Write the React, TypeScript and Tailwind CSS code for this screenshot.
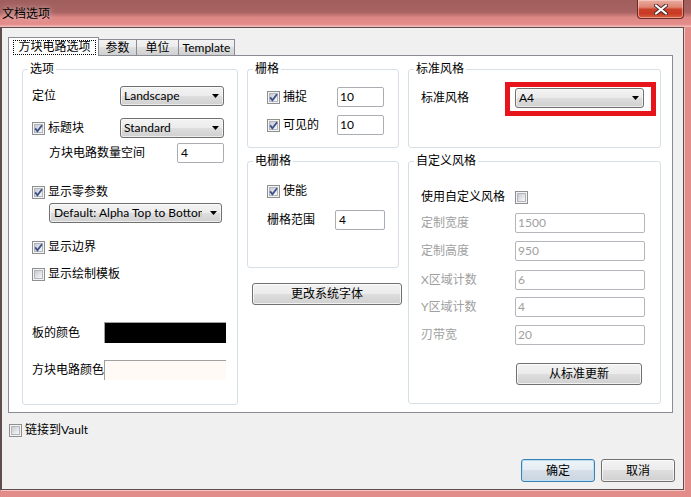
import React from "react";

function Check({ checked }: { checked?: boolean }) {
  return (
    <span className="relative flex h-[13px] w-[13px] shrink-0 items-center justify-center border border-[#8e8f8f] bg-[#f4f4f4]">
      <span className="h-[9px] w-[9px] border border-[#b3b7bd] bg-[linear-gradient(135deg,#c6c9cf_0%,#e3e4e7_55%,#f7f7f7_100%)]" />
      {checked && (
        <svg className="absolute left-[0px] top-[0px]" width="11" height="11" viewBox="0 0 11 11">
          <path d="M2.2 5.4 L4.4 8.2 L9 2.2" fill="none" stroke="#3b4f8c" strokeWidth="1.8" />
        </svg>
      )}
    </span>
  );
}

function Select({ value, className, textClass }: { value: string; className: string; textClass?: string }) {
  return (
    <div
      className={
        "flex h-[20px] items-center rounded-[3px] border border-[#707070] bg-[linear-gradient(to_bottom,#f3f3f3_0%,#ebebeb_50%,#dedede_50%,#d0d0d0_100%)] pl-[3px] pr-[4px] shadow-[inset_0_0_0_1px_rgba(255,255,255,0.6)] " +
        className
      }
    >
      <span className={"overflow-hidden whitespace-nowrap leading-[16px] " + (textClass ?? "flex-1")}>{value}</span>
      <svg className="ml-auto shrink-0" width="7" height="4" viewBox="0 0 7 4">
        <path d="M0 0 H7 L3.5 4 Z" fill="#000" />
      </svg>
    </div>
  );
}

function Input({ value, className, disabled }: { value: string; className: string; disabled?: boolean }) {
  return (
    <div
      className={
        "flex h-[20px] items-center rounded-[2px] border bg-white pl-[2px] leading-[16px] " +
        (disabled ? "border-[#b3b6ba] text-[#a0a0a0] " : "border-[#abadb3] text-black ") +
        className
      }
    >
      {value}
    </div>
  );
}

function Btn({ label, className, def }: { label: string; className: string; def?: boolean }) {
  return (
    <div
      className={
        "flex items-center justify-center rounded-[3px] border leading-[16px] " +
        (def
          ? "border-[#3c7fb1] bg-[linear-gradient(to_bottom,#eef4f9_0%,#e4ecf3_50%,#d6dfe8_50%,#ccd6e0_100%)] shadow-[inset_0_0_0_1px_#b9e0f7] "
          : "border-[#707070] bg-[linear-gradient(to_bottom,#f3f3f3_0%,#ebebeb_50%,#dedede_50%,#d0d0d0_100%)] shadow-[inset_0_0_0_1px_rgba(255,255,255,0.7)] ") +
        className
      }
    >
      {label}
    </div>
  );
}

function Group({ title, className, children }: { title: string; className: string; children?: React.ReactNode }) {
  return (
    <div className={"relative shrink-0 rounded-[3px] border border-[#d5dfe5] " + className}>
      <span className="absolute -top-[9px] left-[5px] bg-white px-[2px] leading-[16px]">{title}</span>
      {children}
    </div>
  );
}

export default function App() {
  return (
    <div className="flex h-[497px] w-[691px] flex-col overflow-hidden bg-[#e38d8b] font-['Lato','Noto_Sans_CJK_SC',sans-serif] text-[12px] text-black">
      {/* Title bar */}
      <div className="flex h-[27px] shrink-0 items-start bg-[linear-gradient(to_bottom,#9f5d5c_0%,#a86362_45%,#dd8886_65%,#e48c8a_90%,#f3c3c1_100%)]">
        <span className="mt-[6px] pl-[2px] leading-[16px] [text-shadow:0_0_6px_rgba(255,255,255,0.7)]">文档选项</span>
        <div className="ml-auto mr-[7px] flex h-[19px] w-[47px] items-center justify-center rounded-b-[4px] border border-t-0 border-[#6b2b28] bg-[linear-gradient(to_bottom,#e9aea4_0%,#de8471_40%,#c9412a_52%,#c93a24_75%,#d9613f_100%)] shadow-[inset_0_0_0_1px_rgba(255,220,210,0.5)]">
          <svg width="14" height="11" viewBox="0 0 14 11">
            <path d="M2 1.5 L12 9.5 M12 1.5 L2 9.5" stroke="#4a2a2a" strokeWidth="4" strokeLinecap="round" />
            <path d="M2 1.5 L12 9.5 M12 1.5 L2 9.5" stroke="#ffffff" strokeWidth="2.2" strokeLinecap="round" />
          </svg>
        </div>
      </div>

      {/* Body */}
      <div className="mr-[7px] flex h-[463px] shrink-0 flex-col border border-l-2 border-[#5f4c4c] bg-[#f0f0f0] pl-[6px] pt-[9px] shadow-[1px_1px_0_0_#f4c6c4]">
        {/* Tabs */}
        <div className="relative z-10 flex h-[18px] items-end">
          <div className="mb-[-1px] flex h-[19px] w-[91px] items-center border border-b-0 border-[#898c95] bg-white pl-[4px]">
            <span className="flex h-[15px] w-[83px] items-center justify-center border border-dotted border-black leading-[14px]">
              方块电路选项
            </span>
          </div>
          <div className="flex h-[16px] w-[38px] items-center justify-center border border-b-0 border-l-0 border-[#898c95] bg-[linear-gradient(to_bottom,#f3f3f3_0%,#ebebeb_50%,#dedede_50%,#d0d0d0_100%)] leading-[14px]">
            参数
          </div>
          <div className="flex h-[16px] w-[42px] items-center justify-center border border-b-0 border-l-0 border-[#898c95] bg-[linear-gradient(to_bottom,#f3f3f3_0%,#ebebeb_50%,#dedede_50%,#d0d0d0_100%)] leading-[14px]">
            单位
          </div>
          <div className="flex h-[16px] w-[56px] items-center justify-center border border-b-0 border-l-0 border-[#898c95] bg-[linear-gradient(to_bottom,#f3f3f3_0%,#ebebeb_50%,#dedede_50%,#d0d0d0_100%)] leading-[14px]">
            Template
          </div>
        </div>

        {/* Panel */}
        <div className="flex h-[358px] w-[665px] shrink-0 border border-[#898c95] bg-white pl-[13px] pt-[13px]">
          {/* 选项 */}
          <Group title="选项" className="h-[336px] w-[216px]">
            <div className="flex flex-col pl-[9px]">
              <div className="mt-[16px] flex h-[20px] items-center">
                <span className="w-[88px]">定位</span>
                <Select value="Landscape" className="w-[104px]" />
              </div>
              <div className="mt-[12px] flex h-[20px] items-center">
                <div className="flex w-[88px] items-center gap-[3px]">
                  <Check checked />
                  <span>标题块</span>
                </div>
                <Select value="Standard" className="w-[104px]" />
              </div>
              <div className="mt-[5px] flex h-[20px] items-center">
                <span className="ml-[17px] w-[128px]">方块电路数量空间</span>
                <Input value="4" className="w-[47px] pl-[3px]" />
              </div>
              <div className="mt-[19px] flex h-[20px] items-center gap-[3px]">
                <Check checked />
                <span>显示零参数</span>
              </div>
              <div className="ml-[17px] mt-[1px] flex">
                <Select value="Default: Alpha Top to Bottom" className="w-[173px] pl-[4px]" textClass="w-[148px]" />
              </div>
              <div className="mt-[14px] flex h-[20px] items-center gap-[3px]">
                <Check checked />
                <span>显示边界</span>
              </div>
              <div className="mt-[7px] flex h-[20px] items-center gap-[3px]">
                <Check />
                <span>显示绘制模板</span>
              </div>
              <div className="mt-[38px] flex h-[21px] items-center">
                <span className="w-[72px]">板的颜色</span>
                <div className="h-[21px] w-[122px] border-l border-t border-[#a0a0a0] bg-black" />
              </div>
              <div className="mt-[17px] flex h-[20px] items-center">
                <span className="w-[72px]">方块电路颜色</span>
                <div className="h-[20px] w-[122px] border-l border-t border-[#a0a0a0] bg-[#fffaf6]" />
              </div>
            </div>
          </Group>

          {/* middle column */}
          <div className="ml-[9px] flex w-[152px] shrink-0 flex-col">
            <Group title="栅格" className="h-[79px] w-[152px]">
              <div className="flex flex-col pl-[19px]">
                <div className="mt-[17px] flex h-[20px] items-center">
                  <div className="flex w-[70px] items-center gap-[3px]">
                    <Check checked />
                    <span>捕捉</span>
                  </div>
                  <Input value="10" className="w-[47px]" />
                </div>
                <div className="mt-[8px] flex h-[20px] items-center">
                  <div className="flex w-[70px] items-center gap-[3px]">
                    <Check checked />
                    <span>可见的</span>
                  </div>
                  <Input value="10" className="w-[47px]" />
                </div>
              </div>
            </Group>
            <Group title="电栅格" className="mt-[13px] h-[107px] w-[152px]">
              <div className="flex flex-col pl-[19px]">
                <div className="mt-[19px] flex h-[20px] items-center gap-[3px]">
                  <Check checked />
                  <span>使能</span>
                </div>
                <div className="mt-[9px] flex h-[20px] items-center">
                  <span className="w-[68px]">栅格范围</span>
                  <Input value="4" className="w-[50px] pl-[3px]" />
                </div>
              </div>
            </Group>
            <Btn label="更改系统字体" className="ml-[5px] mt-[15px] h-[22px] w-[150px] shrink-0" />
          </div>

          {/* right column */}
          <div className="ml-[9px] flex w-[253px] shrink-0 flex-col">
            <Group title="标准风格" className="h-[79px] w-[253px]">
              <div className="flex flex-col pl-[12px]">
                <div className="mt-[18px] flex h-[20px] items-center">
                  <span className="w-[94px]">标准风格</span>
                  <Select value="A4" className="w-[129px]" />
                </div>
              </div>
              <div className="absolute left-[96px] top-[12px] h-[34px] w-[151px] border-[5px] border-[#e8141c]" />
            </Group>
            <Group title="自定义风格" className="mt-[13px] h-[243px] w-[253px]">
              <div className="flex flex-col pl-[12px]">
                <div className="mt-[25px] flex h-[20px] items-center">
                  <span className="w-[94px]">使用自定义风格</span>
                  <Check />
                </div>
                <div className="mt-[6px] flex h-[20px] items-center text-[#a0a0a0]">
                  <span className="w-[94px]">定制宽度</span>
                  <Input value="1500" disabled className="w-[130px]" />
                </div>
                <div className="mt-[8px] flex h-[20px] items-center text-[#a0a0a0]">
                  <span className="w-[94px]">定制高度</span>
                  <Input value="950" disabled className="w-[130px]" />
                </div>
                <div className="mt-[9px] flex h-[20px] items-center text-[#a0a0a0]">
                  <span className="w-[94px]">X区域计数</span>
                  <Input value="6" disabled className="w-[130px]" />
                </div>
                <div className="mt-[7px] flex h-[20px] items-center text-[#a0a0a0]">
                  <span className="w-[94px]">Y区域计数</span>
                  <Input value="4" disabled className="w-[130px]" />
                </div>
                <div className="mt-[8px] flex h-[20px] items-center text-[#a0a0a0]">
                  <span className="w-[94px]">刃带宽</span>
                  <Input value="20" disabled className="w-[130px]" />
                </div>
                <Btn label="从标准更新" className="ml-[95px] mt-[18px] h-[22px] w-[126px]" />
              </div>
            </Group>
          </div>
        </div>

        {/* Vault */}
        <div className="ml-[1px] mt-[7px] flex h-[20px] items-center gap-[3px]">
          <Check />
          <span>链接到Vault</span>
        </div>

        {/* Buttons */}
        <div className="mt-[19px] flex justify-end gap-[6px] pr-[8px]">
          <Btn label="确定" def className="h-[23px] w-[74px]" />
          <Btn label="取消" className="h-[23px] w-[74px]" />
        </div>
      </div>
    </div>
  );
}
